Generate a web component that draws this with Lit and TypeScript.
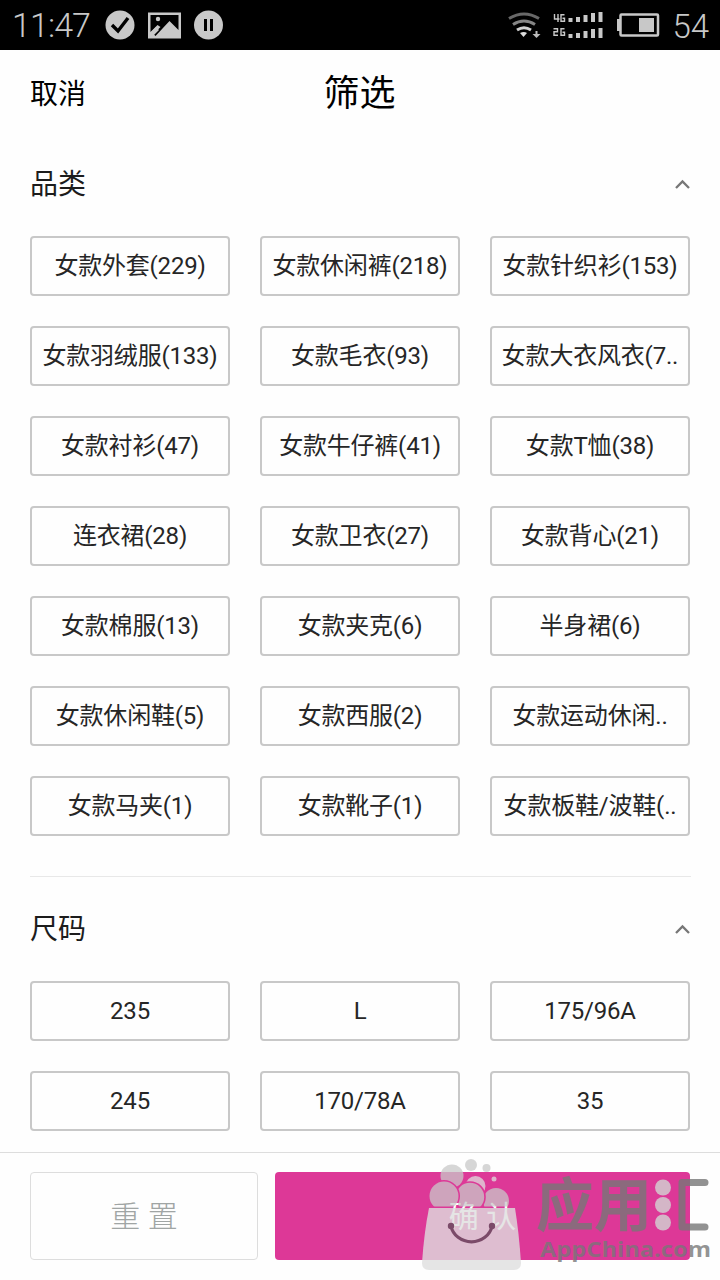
import { LitElement, html, css, svg } from "lit";
import { customElement, property } from "lit/decorators.js";

@customElement("status-bar")
class StatusBar extends LitElement {
  static styles = css`
    :host { display: flex; align-items: center; justify-content: space-between; height: 50px; background: #000; color: #c8c8c8; font: 300 35px/52px Roboto, sans-serif; }
    .side { display: flex; align-items: center; height: 50px; }
    .left { padding-left: 12px; }
    .right { padding-right: 12px; }
    .time { width: 93px; font-size: 34px; line-height: 54px; letter-spacing: -0.9px; }
    .num { font-size: 33px; line-height: 50px; padding-top: 4px; white-space: nowrap; margin-right: -1px; }
    svg { display: block; }
  `;
  render() {
    const heights = [4, 5, 7, 9, 10];
    return html`
      <div class="side left">
        <span class="time">11:47</span>
        <svg width="120" height="50" viewBox="105 0 120 50">
          <circle cx="120" cy="25" r="14.5" fill="#c8c8c8" />
          <path d="M112 25l6 6 10-13" fill="none" stroke="#000" stroke-width="3.4" />
          <path d="M148 12.500h33v26h-33z" fill="#c8c8c8" />
          <path d="M150.500 15h28v15l-9-9-14 15-2-2 7-7-3-2-7 7z" fill="#000" />
          <circle cx="158" cy="19" r="2.200" fill="#c8c8c8" />
          <path d="M150 33l6-6 3 3-8 8h-1z" fill="#c8c8c8" />
          <circle cx="208.500" cy="25" r="14.500" fill="#c8c8c8" />
          <path d="M205.500 19v12M211.500 19v12" stroke="#000" stroke-width="3" />
        </svg>
      </div>
      <div class="side right">
        <svg width="165" height="50" viewBox="507 0 165 50">
          <g fill="none" stroke-width="3">
            <path d="M509 18.500q15-9 30 0" stroke="#686868" />
            <path d="M513 24.500q11-7 22 0" stroke="#858585" />
            <path d="M517 30q7-4.500 14 0" stroke="#d0d0d0" />
          </g>
          <path d="M520 33q4-2 7 0l-3.500 4z" fill="#ddd" />
          <path d="M535.500 31v3h-3l4 4 4-4h-3v-3z" fill="#bbb" />
          <g fill="none" stroke="#c8c8c8" stroke-width="1.400">
            <path d="M554.500 14v5h5M558 14v8M564.500 14.700h-3.500v6.600h3.500v-3h-2" />
            <path d="M553.500 28.700h4v3h-3.500v3.600h4M564.500 28.700h-3.500v6.600h3.500v-3h-2" />
          </g>
          ${[22, 38].map((base) =>
            heights.map((h, i) => svg`<rect x=${568.500 + i * 7.500} y=${base - h} width="4" height=${h} fill="#c8c8c8" />`)
          )}
          <rect x="620.500" y="14.500" width="37.500" height="21" rx="1" fill="none" stroke="#c8c8c8" stroke-width="2.500" />
          <rect x="617" y="19" width="3" height="12" fill="#c8c8c8" />
          <rect x="639" y="18" width="15" height="14" fill="#c8c8c8" />
        </svg>
        <span class="num">54</span>
      </div>
    `;
  }
}

@customElement("filter-section")
class FilterSection extends LitElement {
  @property() heading = "";
  @property({ attribute: false }) items: string[] = [];
  static styles = css`
    :host { display: block; padding: 0 30px; }
    .head { display: flex; align-items: center; justify-content: space-between; height: 40px; font-size: 28px; line-height: 40px; margin-bottom: 32px; }
    .head span { padding-top: 2px; }
    .grid { display: grid; grid-template-columns: repeat(3, 200px); gap: 30px; }
    .chip { box-sizing: border-box; height: 60px; border: 2px solid #c8c8c8; border-radius: 4px; font-size: 24px; line-height: 57px; letter-spacing: -0.2px; text-align: center; white-space: nowrap; color: #262626; }
    svg { display: block; }
  `;
  render() {
    return html`
      <div class="head">
        <span>${this.heading}</span>
        <svg width="16" height="12" viewBox="0 0 16 12"><path d="M2 10L8.500 3.500 15 10" fill="none" stroke="#777" stroke-width="2.300" /></svg>
      </div>
      <div class="grid">${this.items.map((t) => html`<div class="chip">${t}</div>`)}</div>
    `;
  }
}

@customElement("app-root")
class AppRoot extends LitElement {
  static styles = css`
    :host { display: flex; flex-direction: column; position: relative; width: 720px; height: 1280px; overflow: hidden; background: #fefefe; color: #1c1c1c; font-family: Roboto, "Noto Sans CJK SC", sans-serif; }
    .bar { display: grid; grid-template-columns: 1fr auto 1fr; align-items: center; height: 86px; padding: 0 30px; color: #000; }
    .cancel { font-size: 28px; line-height: 42px; padding-top: 4px; }
    .title { font-size: 36px; line-height: 50px; padding-top: 2px; margin-left: -1px; }
    .body { flex: 1; overflow: hidden; padding-top: 28px; }
    .rule { height: 1px; background: #e8e8e8; margin: 40px 29px 32px 30px; }
    .foot { box-sizing: border-box; display: flex; gap: 17px; height: 128px; padding: 19px 30px 20px; border-top: 1px solid #ddd; }
    .btn { box-sizing: border-box; height: 88px; border-radius: 4px; font-size: 30px; line-height: 87px; text-align: center; white-space: pre; }
    .reset { width: 228px; border: 1px solid #ddd; color: #a0a5a4; font-weight: 300; }
    .ok { flex: 1; background: #dd3897; color: #fff; line-height: 89px; }
    .mark { position: absolute; left: 415px; top: 1150px; }
    .mark text { font-family: "Noto Sans CJK SC", sans-serif; font-weight: 700; }
    .mark .latin { font-family: "Open Sans", sans-serif; }
  `;
  categories = [
    "女款外套(229)", "女款休闲裤(218)", "女款针织衫(153)",
    "女款羽绒服(133)", "女款毛衣(93)", "女款大衣风衣(7..",
    "女款衬衫(47)", "女款牛仔裤(41)", "女款T恤(38)",
    "连衣裙(28)", "女款卫衣(27)", "女款背心(21)",
    "女款棉服(13)", "女款夹克(6)", "半身裙(6)",
    "女款休闲鞋(5)", "女款西服(2)", "女款运动休闲..",
    "女款马夹(1)", "女款靴子(1)", "女款板鞋/波鞋(..",
  ];
  sizes = ["235", "L", "175/96A", "245", "170/78A", "35"];
  render() {
    return html`
      <status-bar></status-bar>
      <div class="bar"><span class="cancel">取消</span><span class="title">筛选</span><span></span></div>
      <div class="body">
        <filter-section heading="品类" .items=${this.categories}></filter-section>
        <div class="rule"></div>
        <filter-section heading="尺码" .items=${this.sizes}></filter-section>
      </div>
      <div class="foot"><div class="btn reset">重 置</div><div class="btn ok">确 认</div></div>
      <svg class="mark" width="305" height="130" viewBox="415 1150 305 130">
        <defs>
          <clipPath id="rim"><rect x="415" y="1150" width="120" height="56.500" /></clipPath>
          <mask id="behindLeft" maskUnits="userSpaceOnUse" x="415" y="1150" width="120" height="60">
            <rect x="415" y="1150" width="120" height="60" fill="#fff" /><circle cx="444" cy="1196" r="16" />
          </mask>
          <mask id="behindMid" maskUnits="userSpaceOnUse" x="415" y="1150" width="120" height="60">
            <rect x="415" y="1150" width="120" height="60" fill="#fff" /><circle cx="470" cy="1197" r="15.800" />
          </mask>
          <mask id="behindFront" maskUnits="userSpaceOnUse" x="415" y="1150" width="120" height="60">
            <rect x="415" y="1150" width="120" height="60" fill="#fff" /><circle cx="444" cy="1196" r="16" /><circle cx="470" cy="1197" r="15.800" />
          </mask>
        </defs>
        <path d="M429 1208h86q4 25 6 55 0 7-7 7h-85q-7 0-7-7 2-30 7-55z" fill="#dedede" fill-opacity=".8" />
        <g clip-path="url(#rim)" fill="#c8c8c8" fill-opacity=".75">
          <circle cx="444" cy="1196" r="14.500" />
          <circle cx="470" cy="1197" r="14.200" mask="url(#behindLeft)" />
          <circle cx="496" cy="1201" r="13" mask="url(#behindMid)" />
          <circle cx="452" cy="1176" r="11.500" mask="url(#behindFront)" />
          <circle cx="475.500" cy="1186" r="10" fill="#ddd" mask="url(#behindFront)" />
          <circle cx="471" cy="1165" r="6" />
          <circle cx="486.500" cy="1168" r="4" />
          <circle cx="494" cy="1179" r="2.500" fill="#ddd" />
        </g>
        <g fill="#d2d2d2" fill-opacity=".82">
          <circle cx="663" cy="1187.500" r="8" />
          <circle cx="663" cy="1205" r="8" />
          <circle cx="663" cy="1222.500" r="8" />
        </g>
        <g fill="none" stroke="#7b4b69" stroke-width="3.200"><path d="M451 1226a20.800 19 0 0 0 41 0" /></g>
        <g fill="#7b4b69"><circle cx="451" cy="1226" r="3.200" /><circle cx="492" cy="1226" r="3.200" /></g>
        <path d="M705 1182.500h-23v44.500h23" fill="none" stroke="#777" stroke-opacity=".8" stroke-width="7" stroke-linecap="round" stroke-linejoin="round" />
        <g fill="#777" fill-opacity=".8">
          <text x="536" y="1226" font-size="58" textLength="116">应用</text>
          <text class="latin" x="540" y="1257" font-size="21" textLength="171" lengthAdjust="spacingAndGlyphs">AppChina.com</text>
        </g>
      </svg>
    `;
  }
}
